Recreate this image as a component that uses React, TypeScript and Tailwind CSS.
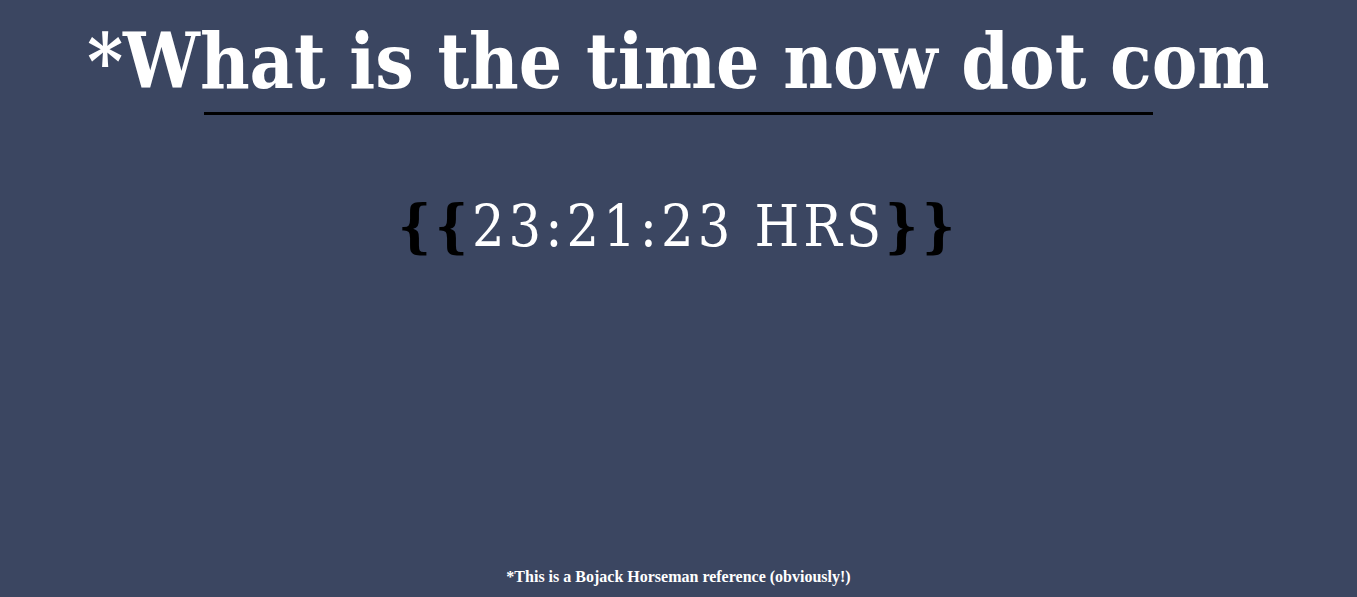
export default function App() {
  return (
    <div className="flex h-[597px] flex-col items-center bg-[#3b4661] text-white [font-family:'DejaVu_Serif',serif] [font-stretch:condensed]">
      <h1 className="mt-[14px] whitespace-nowrap text-[76px] font-bold leading-[96px]">*What is the time now dot com</h1>
      <div className="mt-[2px] h-[3px] w-[70%] bg-black" />
      <div className="mt-[76px] whitespace-nowrap text-[57px] leading-[70px] tracking-[4px]">
        <span className="font-bold text-black">{'{{'}</span>
        23:21:23 HRS
        <span className="font-bold text-black">{'}}'}</span>
      </div>
      <p className="mt-auto mb-[8px] text-[16px] font-bold [font-family:'Liberation_Serif',serif] [font-stretch:normal]">
        *This is a Bojack Horseman reference (obviously!)
      </p>
    </div>
  );
}
